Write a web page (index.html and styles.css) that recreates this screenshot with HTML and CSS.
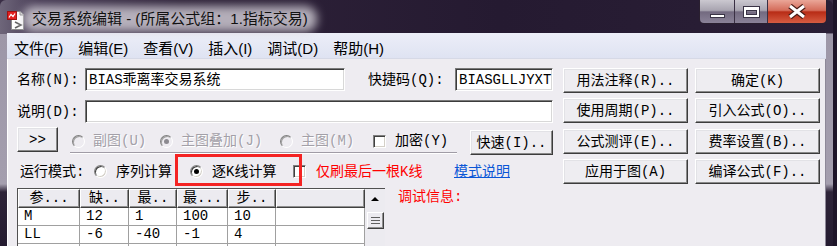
FILE: index.html
```html
<!DOCTYPE html>
<html lang="zh-cn">
<head>
	<meta charset="UTF-8">
	<title>交易系统编辑</title>
	<link rel="stylesheet" href="styles.css">
</head>
<body>

	<div id="win">
		<div class="titlebar">
			<svg class="appicon" width="18" height="20" viewBox="0 0 18 20">
				<path d="M4.5 1.5H13L16.5 5V19.5H4.5Z" fill="#fff" stroke="#8a8a8a"/>
				<path d="M13 1.5V5H16.5" fill="#ddd" stroke="#8a8a8a"/>
				<rect x="0.5" y="1.5" width="9" height="8" fill="#e42020" stroke="#a01010"/>
				<path d="M2 7.5L4 4.5L6 6.5L8 3.5" fill="none" stroke="#fff" stroke-width="1.2"/>
				<path d="M8 12L14 15L8 18" fill="none" stroke="#606060" stroke-width="1.6"/>
			</svg>
			<span class="title">交易系统编辑 - (所属公式组：1.指标交易)</span>
			<div class="ctrls">
				<span class="cb min"><i class="g-min"></i></span>
				<span class="cb max"><i class="g-max"></i></span>
				<span class="cb close">
					<svg width="20" height="15" viewBox="0 0 20 15">
						<path d="M3 2L17 13M17 2L3 13" stroke="#4a1c16" stroke-width="5.5"/>
						<path d="M3 2L17 13M17 2L3 13" stroke="#fff" stroke-width="3"/>
					</svg>
				</span>
			</div>
		</div>

		<div class="client">
			<ul class="menu">
				<li>文件(F)</li>
				<li>编辑(E)</li>
				<li>查看(V)</li>
				<li>插入(I)</li>
				<li>调试(D)</li>
				<li>帮助(H)</li>
			</ul>

			<div class="main">
				<div class="form">
					<div class="row r1">
						<label class="lbl">名称(N):</label>
						<span class="edit e-name">BIAS乖离率交易系统</span>
						<label class="lbl2">快捷码(Q):</label>
						<span class="edit e-code">BIASGLLJYXT</span>
					</div>
					<div class="row r2">
						<label class="lbl">说明(D):</label>
						<span class="edit e-desc"></span>
					</div>
					<div class="row r3">
						<span class="btn b-more">&gt;&gt;</span>
						<div class="group">
							<span class="opt dis o1"><i class="radio"></i>副图(U)</span>
							<span class="opt dis o2"><i class="radio on"></i>主图叠加(J)</span>
							<span class="opt dis o3"><i class="radio"></i>主图(M)</span>
							<span class="opt o4"><i class="chk"></i>加密(Y)</span>
						</div>
						<span class="btn b-fast">快速(I)..</span>
					</div>
					<div class="row r4">
						<span class="mode">运行模式:</span>
						<span class="opt o-seq"><i class="radio"></i>序列计算</span>
						<span class="opt o-k"><i class="radio on"></i>逐K线计算</span>
						<i class="chk"></i>
						<span class="note">仅刷最后一根K线</span>
						<span class="link">模式说明</span>
						<span class="mark"></span>
					</div>
				</div>

				<div class="btns">
					<span class="btn">用法注释(R)..</span>
					<span class="btn">确定(K)</span>
					<span class="btn">使用周期(P)..</span>
					<span class="btn">引入公式(O)..</span>
					<span class="btn">公式测评(E)..</span>
					<span class="btn">费率设置(B)..</span>
					<span class="btn">应用于图(A)</span>
					<span class="btn">编译公式(F)..</span>
				</div>
			</div>

			<div class="lower">
				<div class="grid">
					<div class="cols">
						<div class="hd">
							<span class="c1">参...</span>
							<span class="c2">缺..</span>
							<span class="c3">最..</span>
							<span class="c4">最...</span>
							<span class="c5">步..</span>
							<span class="c6"></span>
						</div>
						<div class="tr">
							<span class="c1">M</span>
							<span class="c2">12</span>
							<span class="c3">1</span>
							<span class="c4">100</span>
							<span class="c5">10</span>
							<span class="c6"></span>
						</div>
						<div class="tr">
							<span class="c1">LL</span>
							<span class="c2">-6</span>
							<span class="c3">-40</span>
							<span class="c4">-1</span>
							<span class="c5">4</span>
							<span class="c6"></span>
						</div>
						<div class="tr">
							<span class="c1"></span>
							<span class="c2"></span>
							<span class="c3"></span>
							<span class="c4"></span>
							<span class="c5"></span>
							<span class="c6"></span>
						</div>
					</div>
					<div class="vs">
						<span class="up"><i></i></span>
						<span class="thumb"><i></i></span>
					</div>
				</div>
				<div class="debug">调试信息:</div>
			</div>
		</div>
	</div>

</body>
</html>
```

FILE: styles.css
```css
* {padding: 0; margin: 0; box-sizing: border-box;}
li {list-style: none;}
i {display: block;}
html, body {width: 837px; height: 246px; overflow: hidden; background: #1e1529;}

#win {width: 833px; height: 246px; background: linear-gradient(#3a2e46 0, #3a2e46 33px, #9d97a8 34px, #a49eae 184px, #2e2439 192px, #241b30 100%); font: 14px/18px "Liberation Mono", "Noto Sans CJK SC", monospace; color: #000;}

/* title bar */
.titlebar {height: 33px; display: flex; align-items: flex-start; background: linear-gradient(to right, #6e667a 0, #463a54 40px, #2e2239 180px, #251a31 500px, #2a1f36 100%); border-radius: 6px 6px 0 0;}
.appicon {flex: none; margin: 10px 0 0 7px;}
.title {position: relative; z-index: 0; margin: 9px 0 0 7px; font: 15px/20px "Liberation Sans", "Noto Sans CJK SC", sans-serif; color: #111; white-space: nowrap;}
.title::before {content: ""; position: absolute; left: -9px; right: -9px; top: -3px; bottom: -3px; background: #d6d2da; opacity: .8; border-radius: 12px; filter: blur(5px); z-index: -1;}
.ctrls {display: flex; margin: 0 6px 0 auto; height: 24px; border: 1px solid #2a2030; border-top: none; border-radius: 0 0 5px 5px; overflow: hidden;}
.cb {height: 23px; display: flex; justify-content: center;}
.min {width: 34px; align-items: flex-end; padding-bottom: 5px; background: linear-gradient(#cbc8d0, #a8a4b0 45%, #736a80 52%, #8a8298);}
.max {width: 33px; align-items: center; border-left: 1px solid #3a3044; background: linear-gradient(#cbc8d0, #a8a4b0 45%, #736a80 52%, #8a8298);}
.close {width: 59px; align-items: center; border-left: 1px solid #3a3044; background: linear-gradient(#eaa698, #d46c5a 45%, #b82c16 52%, #d65c42);}
.g-min {width: 15px; height: 4px; background: #fff; border: 1px solid #3a3446;}
.g-max {width: 15px; height: 10px; border: 2px solid #fff; border-top-width: 3px; outline: 1px solid #3a3446; box-shadow: inset 0 0 0 1px #3a3446;}

/* client */
.client {margin: 0 7px; height: 213px; overflow: hidden; background: #eeecf1; box-shadow: inset 1px 0 0 #fff, inset -1px 0 0 #8d8898;}
.menu {display: flex; gap: 15px; height: 26px; padding: 6px 0 0 7px; font: 15px/20px "Liberation Sans", "Noto Sans CJK SC", sans-serif; background: linear-gradient(#eceef8, #dfe3f2); border-bottom: 1px solid #d6d9e6;}

.main {display: flex; align-items: flex-start; padding: 9px 0 0 10px;}
.form {width: 536px;}
.row {display: flex; align-items: center; white-space: nowrap;}
.r1 {height: 23px;}
.r2 {height: 23px; margin-top: 9px;}
.r3 {height: 28px; margin-top: 4px; align-items: flex-start;}
.r4 {height: 33px; position: relative;}

.lbl {width: 68px; flex: none;}
.lbl2 {width: 87px; margin-left: 23px; flex: none;}
.edit {height: 23px; flex: none; background: #fff; border: 1px solid; border-color: #7a7a7a #fff #fff #7a7a7a; box-shadow: inset 1px 1px 0 #3c3c3c, inset -1px -1px 0 #d8d8d8; padding: 2px 0 0 3px; line-height: 18px; overflow: hidden;}
.e-name {width: 260px;}
.e-code {width: 98px;}
.e-desc {width: 468px;}

.btn {height: 25px; display: flex; align-items: center; justify-content: center; white-space: nowrap; background: #eeedf1; border: 1px solid; border-color: #fff #3c3c3c #3c3c3c #fff; box-shadow: inset -1px -1px 0 #8a8a8a, inset 1px 1px 0 #e2e2e6;}
.b-more {width: 41px; flex: none;}
.b-fast {width: 83px; flex: none; margin: 3px 0 0 13px;}

.group {display: flex; align-items: center; width: 387px; height: 26px; margin-left: 12px; padding: 3px 0 0 2px; border-bottom: 1px solid #a09ca6; box-shadow: 0 1px 0 #fff;}
.opt {display: flex; align-items: center; flex: none;}
.o1 {width: 88px;}
.o2 {width: 120px;}
.o3 {width: 93px;}
.dis {color: #a3a0a8; text-shadow: 1px 1px 0 #fff;}
.radio {position: relative; width: 13px; height: 13px; flex: none; margin-right: 8px; border-radius: 50%; background: #fff; border: 1px solid; border-color: #808080 #fff #fff #808080; box-shadow: inset 1px 1px 0 #404040, inset -1px -1px 0 #d4d0c8;}
.dis .radio {background: #eeecf1; box-shadow: inset 1px 1px 0 #a0a0a0;}
.radio.on::after {content: ""; position: absolute; left: 3px; top: 3px; width: 5px; height: 5px; border-radius: 50%; background: #000;}
.dis .radio.on::after {background: #8c8a90;}
.chk {width: 13px; height: 13px; flex: none; background: #fff; border: 1px solid; border-color: #808080 #fff #fff #808080; box-shadow: inset 1px 1px 0 #404040, inset -1px -1px 0 #d4d0c8;}
.o4 .chk {margin-right: 9px;}

.mode {width: 74px; margin-left: 3px; flex: none;}
.o-seq {width: 96px;}
.o-k {width: 103px;}
.r4 .radio {margin-right: 9px;}
.r4 > .chk {margin-right: 10px;}
.note {width: 138px; flex: none; color: #f00;}
.link {color: #0a56d6; text-decoration: underline;}
.mark {position: absolute; left: 158px; top: -1px; width: 127px; height: 32px; border: 3px solid #f42323;}

.btns {display: grid; grid-template-columns: 125px 125px; grid-template-rows: 25px 26px 25px 25px; gap: 5px 7px; margin-left: 10px; align-items: start;}

/* parameter grid */
.lower {display: flex; align-items: flex-start; padding-left: 10px;}
.grid {display: flex; width: 368px; height: 80px; background: #fff; border-top: 1px solid #505050; border-left: 1px solid #505050;}
.cols {width: 347px;}
.hd, .tr {display: flex;}
.hd span, .tr span {flex: none; white-space: nowrap;}
.hd span {height: 19px; line-height: 17px; text-align: center; background: #ecebf0; border: 1px solid; border-color: #fff #404040 #404040 #fff; box-shadow: inset -1px -1px 0 #909090;}
.tr span {height: 18px; line-height: 17px; padding-left: 6px; border-right: 1px solid #a0a0a0; border-bottom: 1px solid #a0a0a0;}
.c1 {width: 62px;}
.c2 {width: 49px;}
.c3 {width: 48px;}
.c4 {width: 51px;}
.c5 {width: 48px;}
.c6 {width: 89px;}
.vs {width: 20px; display: flex; flex-direction: column; align-items: center; background: #ecebf0;}
.up {height: 19px; display: flex; align-items: center; justify-content: center;}
.up i {width: 0; height: 0; border-left: 4px solid transparent; border-right: 4px solid transparent; border-bottom: 4px solid #000;}
.thumb {width: 17px; height: 17px; margin-top: 4px; display: flex; align-items: center; justify-content: center; background: #ecebf0; border: 1px solid; border-color: #fff #404040 #404040 #fff; box-shadow: inset -1px -1px 0 #909090;}
.thumb i {width: 9px; height: 7px; background: repeating-linear-gradient(#606060 0, #606060 1px, transparent 1px, transparent 3px);}
.debug {margin-left: 13px; color: #f00; line-height: 18px; white-space: nowrap;}
```
